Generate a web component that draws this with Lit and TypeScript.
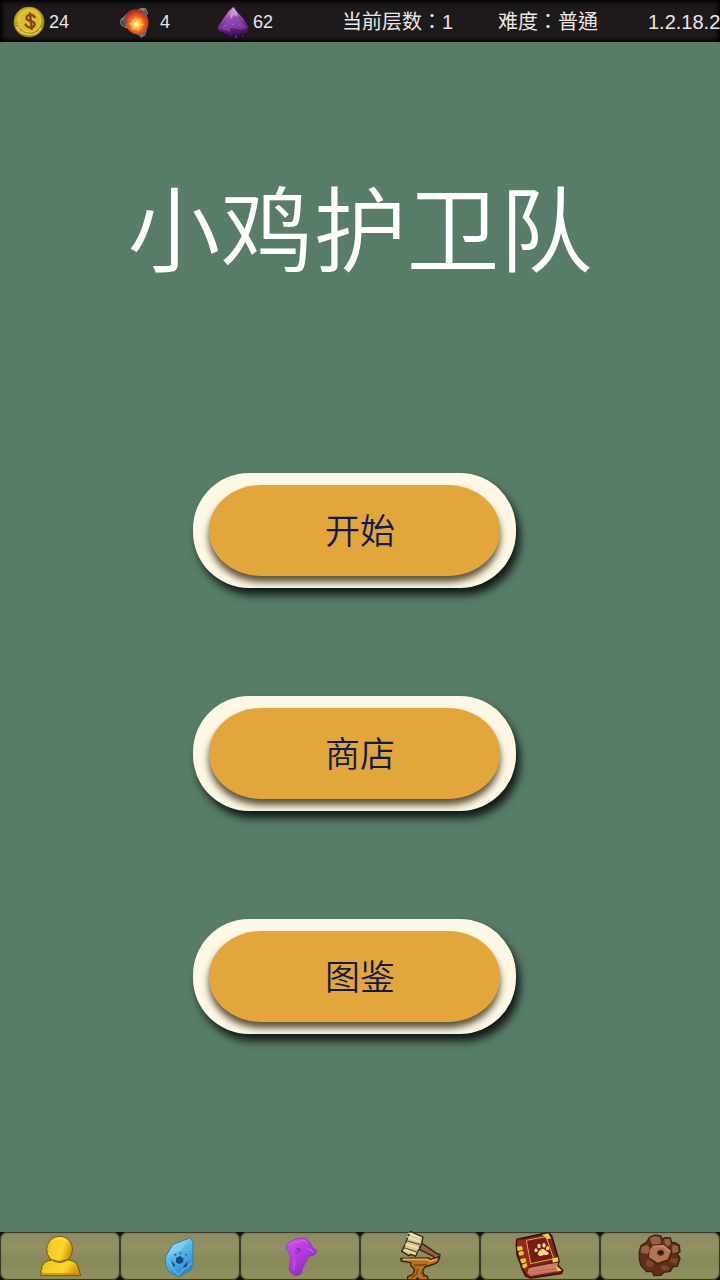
import { LitElement, html, css, svg, TemplateResult } from "lit";
import { customElement, property } from "lit/decorators.js";

const coin = svg`
  <defs>
    <radialGradient id="coin-face" cx="45%" cy="40%" r="60%">
      <stop offset="0" stop-color="#e0c62f" />
      <stop offset="0.7" stop-color="#d3ae22" />
      <stop offset="1" stop-color="#8f7a1c" />
    </radialGradient>
  </defs>
  <circle cx="48" cy="48" r="46" fill="#a8912f" />
  <circle cx="49" cy="48" r="43" fill="url(#coin-face)" />
  <circle cx="50" cy="45" r="33" fill="#d9bd2c" stroke="#e8d550" stroke-width="3" />
  <path d="M10 62Q22 86 50 86Q74 86 84 66" fill="none" stroke="#eddc58" stroke-width="4" />
  <path d="M6 50L16 50M9 62L18 58M20 76L27 68M78 76L72 69" stroke="#a58c22" stroke-width="3" />
  <path d="M65 33Q58 24 48 27Q37 31 42 40Q46 44 56 46Q68 50 64 59Q59 67 48 64Q41 62 38 56M51 22L56 69" fill="none" stroke="#84461d" stroke-width="7" stroke-linecap="round" />`;

const ember = svg`
  <defs>
    <radialGradient id="ember-fire" cx="52%" cy="58%" r="56%">
      <stop offset="0" stop-color="#fff6a8" />
      <stop offset="0.25" stop-color="#ffc040" />
      <stop offset="0.55" stop-color="#ee6425" />
      <stop offset="0.85" stop-color="#c93c22" />
      <stop offset="1" stop-color="#8d2418" />
    </radialGradient>
  </defs>
  <path d="M22 26Q12 34 4 43Q3 50 8 58L22 66L26 46ZM57 12L66 7L80 8L86 22L78 32ZM55 82L66 94L77 88L82 72L70 72Z" fill="#4c4a55" stroke="#a9a2aa" stroke-width="2" stroke-linejoin="round" />
  <path d="M16 44Q18 20 38 14Q52 9 66 14Q85 24 87 46Q88 68 74 81Q58 89 42 81Q20 68 16 44Z" fill="url(#ember-fire)" stroke="#c4604f" stroke-width="2" />
  <path d="M50 33L55 45L68 37L63 50L76 57L62 60L60 74L51 65L38 73L41 60L29 52L41 49L35 38L46 44Z" fill="#ffc536" opacity="0.85" />
  <circle cx="52" cy="55" r="8" fill="#fff2a0" />
  <path d="M20 30L10 42L20 56L24 44ZM66 10L78 10L82 24L73 22ZM62 84L77 78L74 86L66 90Z" fill="#5a5866" />
  <path d="M8 42L15 35M68 11L77 12M66 88L73 85" stroke="#b5b0bc" stroke-width="3" />`;

const dust = svg`
  <defs>
    <linearGradient id="dust-fill" x1="0.4" y1="0" x2="0.6" y2="1">
      <stop offset="0" stop-color="#d6a6e4" />
      <stop offset="0.35" stop-color="#9450b5" />
      <stop offset="0.7" stop-color="#672189" />
      <stop offset="1" stop-color="#3d0d58" />
    </linearGradient>
  </defs>
  <path d="M49 3L60 17L78 37L94 62L91 77L83 84L70 82L66 90L57 86L43 88L34 84L24 83L18 77L5 74L2 64L17 41L35 16Z" fill="url(#dust-fill)" />
  <path d="M48 5L35 35L24 54L8 66L23 73L47 67L72 71L88 64L69 43L57 30Z" fill="#9a54bb" opacity="0.5" />
  <path d="M49 4L60 20L62 32L51 27L42 38L38 26Z" fill="#dfb8e9" opacity="0.6" />
  <path d="M22 57L28 59M44 54L51 56M66 56L71 60M30 71L38 74" stroke="#a86cc0" stroke-width="3" />
  <circle cx="39" cy="90" r="3" fill="#5c197a" />
  <circle cx="57" cy="92" r="4" fill="#6c2589" />
  <circle cx="77" cy="89" r="3" fill="#5c197a" />`;

const person = svg`
  <defs>
    <linearGradient id="person-gold" x1="0" y1="0" x2="1" y2="0.3">
      <stop offset="0" stop-color="#e3a814" />
      <stop offset="0.3" stop-color="#f7cc22" />
      <stop offset="0.7" stop-color="#fad72f" />
      <stop offset="1" stop-color="#d79b12" />
    </linearGradient>
  </defs>
  <path d="M12 131L17 122L14 116L18 110L17 104Q24 86 46 84L98 84Q126 88 128 110L134 131Z" fill="url(#person-gold)" stroke="#6d540d" stroke-width="3" stroke-linejoin="round" />
  <path d="M71 13C94 13 109 30 109 52C109 74 93 91 71 91C54 91 42 82 37 70L32 66L35 58L31 53L34 46L32 41L37 34C43 21 55 13 71 13Z" fill="url(#person-gold)" stroke="#71580f" stroke-width="3" stroke-linejoin="round" />
  <path d="M46 31Q56 19 72 19Q86 20 95 29" fill="none" stroke="#fdec62" stroke-width="3" stroke-linecap="round" opacity="0.7" />
  <path d="M50 83Q70 94 90 83" fill="none" stroke="#a7750c" stroke-width="4" />
  <path d="M18 126L128 126" stroke="#c48c10" stroke-width="4" />`;

const crystal = svg`
  <defs>
    <linearGradient id="crystal-fill" x1="0.2" y1="0" x2="0.7" y2="1">
      <stop offset="0" stop-color="#8ad8f0" />
      <stop offset="0.5" stop-color="#4fb3e4" />
      <stop offset="1" stop-color="#2c80c8" />
    </linearGradient>
  </defs>
  <path d="M101 18L111 28L111 86L106 113L68 135L38 119L29 100L29 73L51 37Z" fill="url(#crystal-fill)" stroke="#397e91" stroke-width="3" stroke-linejoin="round" />
  <path d="M101 21L73 56L33 72L53 39Z" fill="#8cd6f0" opacity="0.6" />
  <path d="M31 79L48 105L67 131L83 111L108 94" fill="none" stroke="#74ccf0" stroke-width="3" opacity="0.8" />
  <path d="M60 78L72 72L83 80L80 92L68 96L60 90ZM46 84L58 100L52 106ZM88 96L95 86L92 104L80 108ZM70 60L76 63L73 68Z" fill="#184789" />
  <circle cx="58" cy="68" r="3" fill="#205896" />
  <circle cx="90" cy="68" r="3" fill="#205896" />`;

const slime = svg`
  <defs>
    <linearGradient id="slime-fill" x1="0" y1="0" x2="0.7" y2="1">
      <stop offset="0" stop-color="#d552ec" />
      <stop offset="0.5" stop-color="#b43ae0" />
      <stop offset="1" stop-color="#8c26b4" />
    </linearGradient>
  </defs>
  <path d="M31 49Q28 35 45 28Q57 19 73 18Q91 14 98 28Q107 35 110 47Q124 53 122 62Q117 70 103 72Q92 79 88 94Q80 105 77 123Q67 134 56 131Q43 124 39 112Q42 98 43 75Q38 58 31 49Z" fill="url(#slime-fill)" stroke="#8a39a4" stroke-width="2" />
  <path d="M42 38Q56 28 68 29Q83 22 93 32M55 84Q58 98 52 112M96 50Q106 54 112 60" fill="none" stroke="#e06df2" stroke-width="5" stroke-linecap="round" opacity="0.5" />
  <path d="M60 52L71 49L66 58L77 57M57 61L66 63" fill="none" stroke="#7a2aa6" stroke-width="3" />`;

const anvil = svg`
  <g stroke="#35240f" stroke-width="4" stroke-linejoin="round">
    <path d="M74 40L78 34L122 64L132 68L130 80L117 80L112 73L71 53Z" fill="#936044" />
    <path d="M43 -2L81 15L76 39L70 47L59 73L45 67L39 71L17 58L29 34L31 26Z" fill="#d9ca98" />
    <path d="M31 26L76 39M25 48L66 61" fill="none" stroke="#6d5839" />
    <path d="M15 79L98 78L103 83L130 74Q130 94 105 99L87 105L80 116L83 128L95 134L95 144L69 144L65 137L60 144L35 144L35 134L51 126L56 112L45 102L44 92L15 87Z" fill="#b87121" />
  </g>
  <path d="M37 3L73 18M33 14L71 28M28 36L69 49M28 52L59 66" stroke="#f2e6ba" stroke-width="4" />
  <path d="M21 82L94 82L103 88L122 81" fill="none" stroke="#f0aa3d" stroke-width="5" />
  <path d="M54 100L93 98M66 110L61 128L44 137M74 121L86 136" fill="none" stroke="#814713" stroke-width="5" />`;

const book = svg`
  <g stroke-linejoin="round">
    <path d="M3 22L97 2L107 12L129 87L125 100L140 115L136 124L44 138L29 132L19 112L12 91L4 71L1 39Z" fill="#822318" stroke="#30170d" stroke-width="5" />
    <path d="M38 110L47 103L127 92L124 102L137 115L44 132L34 123Z" fill="#cf7b68" />
    <path d="M37 106L124 89" stroke="#551816" stroke-width="4" />
    <path d="M40 120L130 108M42 128L134 116" stroke="#b65c58" stroke-width="2" />
    <path d="M5 22L31 27L41 101L29 119L4 44Z" fill="#9a281e" />
    <path d="M31 25L90 14L113 80L44 95Z" fill="#741d14" stroke="#d7b244" stroke-width="3" />
    <path d="M78 8L97 4L105 20L94 21ZM108 80L125 75L128 88L111 92ZM119 103L138 115L125 118Z" fill="#edce4c" />
    <path d="M2 45L16 41L21 49L18 55L5 57ZM7 61L21 56L24 65L20 70L10 71ZM12 82L28 78L31 86L27 92L16 94ZM18 98L32 93L34 102L27 109L20 107Z" fill="#e6c244" />
  </g>
  <g fill="#f5d889">
    <ellipse cx="60" cy="55" rx="5" ry="6" />
    <ellipse cx="69" cy="42" rx="5" ry="7" />
    <ellipse cx="84" cy="40" rx="5" ry="7" />
    <ellipse cx="95" cy="49" rx="5" ry="6" />
    <path d="M69 58Q79 44 89 56L99 63Q97 72 84 68Q72 76 66 68Q65 62 69 58Z" />
  </g>`;

const gear = svg`
  <path d="M40 16L56 9L74 12L80 23L85 17L103 18L107 32L116 31L130 40L132 60L124 64L132 79L124 103L111 104L103 118L84 121L75 130L54 131L48 119L32 119L15 101L10 82L10 58L15 41L32 30Z" fill="#5e2f1a" stroke="#412114" stroke-width="4" stroke-linejoin="round" />
  <path d="M41 18L57 12L72 16L75 34L50 42ZM84 22L101 21L104 36L90 47ZM110 38L126 43L127 59L107 64ZM16 46L32 38L44 50L36 66L15 62Z" fill="#9b6042" />
  <path d="M107 78L127 80L120 98L100 88ZM82 98L97 104L99 113L82 117L72 104ZM30 84L42 80L56 96L44 108L31 102Z" fill="#7c4429" />
  <path d="M44 38L86 36L110 58L98 88L64 98L34 78Z" fill="#4a2415" />
  <path d="M50 41L83 38L105 57L95 82L65 92L39 76L41 54Z" fill="#b57450" />
  <path d="M52 44L82 42L101 57" fill="none" stroke="#cb8d68" stroke-width="4" />
  <ellipse cx="74" cy="62" rx="10" ry="8" fill="#25160f" stroke="#734126" stroke-width="3" />`;

@customElement("status-bar")
export class StatusBar extends LitElement {
  static styles = css`
    :host {
      display: block;
      background: #000;
    }
    header {
      display: grid;
      grid-template-columns: 106fr 98fr 125fr 156fr 150fr 72fr;
      align-items: center;
      height: 42px;
      padding: 2px 0 0 13px;
      box-sizing: border-box;
      border-radius: 6px;
      background: #1e191a;
      box-shadow: inset 0 0 4px 2px #000;
      color: #e9e7e7;
      font-size: 20px;
      line-height: 24px;
      white-space: nowrap;
    }
    header > * {
      min-width: 0;
    }
    .stat {
      display: flex;
      align-items: center;
    }
    svg {
      width: 32px;
      height: 32px;
      flex: none;
    }
    .value {
      width: 28px;
      text-align: center;
      font-size: 18px;
    }
  `;

  stat(label: string, icon: TemplateResult, value: number) {
    return html`
      <div class="stat" aria-label=${label}>
        <svg viewBox="0 0 96 96" aria-hidden="true">${icon}</svg>
        <span class="value">${value}</span>
      </div>
    `;
  }

  render() {
    return html`
      <header>
        ${this.stat("金币", coin, 24)} ${this.stat("火石", ember, 4)}
        ${this.stat("紫晶", dust, 62)}
        <span>当前层数：1</span>
        <span>难度：普通</span>
        <span>1.2.18.2</span>
      </header>
    `;
  }
}

@customElement("menu-button")
export class MenuButton extends LitElement {
  /* the plate stops 11px short on the right, where its shadow falls;
     the label is centred on plate and shadow together */
  static styles = css`
    :host {
      display: block;
      padding-right: 11px;
    }
    button {
      display: block;
      width: 100%;
      padding: 12px 16px;
      border: 0;
      border-radius: 56px;
      background: #fcf8e3;
      box-shadow: 4px 7px 8px rgba(0, 0, 0, 0.8);
      font: inherit;
      color: #121b4b;
      cursor: pointer;
    }
    .face {
      display: block;
      padding: 2px 0 0 11px;
      border-radius: 52px / 45px;
      background: #e2a63d;
      box-shadow: 0 6px 7px rgba(40, 25, 0, 0.75);
      font-size: 35px;
      font-weight: 350;
      line-height: 89px;
    }
    button:active .face {
      background: #cf9432;
    }
  `;

  @property() label = "";

  render() {
    return html`
      <button type="button"><span class="face">${this.label}</span></button>
    `;
  }
}

@customElement("tab-bar")
export class TabBar extends LitElement {
  static styles = css`
    :host {
      display: block;
      background: #0c0c08;
    }
    nav {
      display: grid;
      grid-template-columns: repeat(6, 1fr);
    }
    button {
      display: flex;
      justify-content: center;
      height: 48px;
      padding: 0;
      border: 0;
      border-radius: 7px;
      background: linear-gradient(#8c8b60, #929165 35%, #86895a 60%, #93925f);
      box-shadow: inset 0 0 1px 1px #34341f;
      cursor: pointer;
    }
    svg {
      width: 48px;
      height: 48px;
      overflow: visible;
    }
  `;

  tabs = [
    { label: "角色", icon: person },
    { label: "水晶", icon: crystal },
    { label: "材料", icon: slime },
    { label: "锻造", icon: anvil },
    { label: "图鉴", icon: book },
    { label: "设置", icon: gear },
  ];

  render() {
    return html`
      <nav>
        ${this.tabs.map(
          (tab) => html`
            <button type="button" aria-label=${tab.label}>
              <svg viewBox="0 0 144 144" aria-hidden="true">${tab.icon}</svg>
            </button>
          `
        )}
      </nav>
    `;
  }
}

@customElement("app-root")
export class AppRoot extends LitElement {
  static styles = css`
    :host {
      display: flex;
      flex-direction: column;
      min-height: 100vh;
      background: #577d68;
      font-family: "Liberation Sans", "Noto Sans CJK TC", sans-serif;
    }
    main {
      flex: 1;
      display: flex;
      flex-direction: column;
      align-items: center;
      padding: 135px 16px 64px;
    }
    h1 {
      margin: 0 0 184px;
      color: #fff;
      font-size: 93px;
      font-weight: 350;
      line-height: 112px;
      text-align: center;
    }
    .menu {
      display: flex;
      flex-direction: column;
      gap: 108px;
      width: 100%;
      max-width: 334px;
    }
  `;

  render() {
    return html`
      <status-bar></status-bar>
      <main>
        <h1>小鸡护卫队</h1>
        <div class="menu">
          <menu-button label="开始"></menu-button>
          <menu-button label="商店"></menu-button>
          <menu-button label="图鉴"></menu-button>
        </div>
      </main>
      <tab-bar></tab-bar>
    `;
  }
}
